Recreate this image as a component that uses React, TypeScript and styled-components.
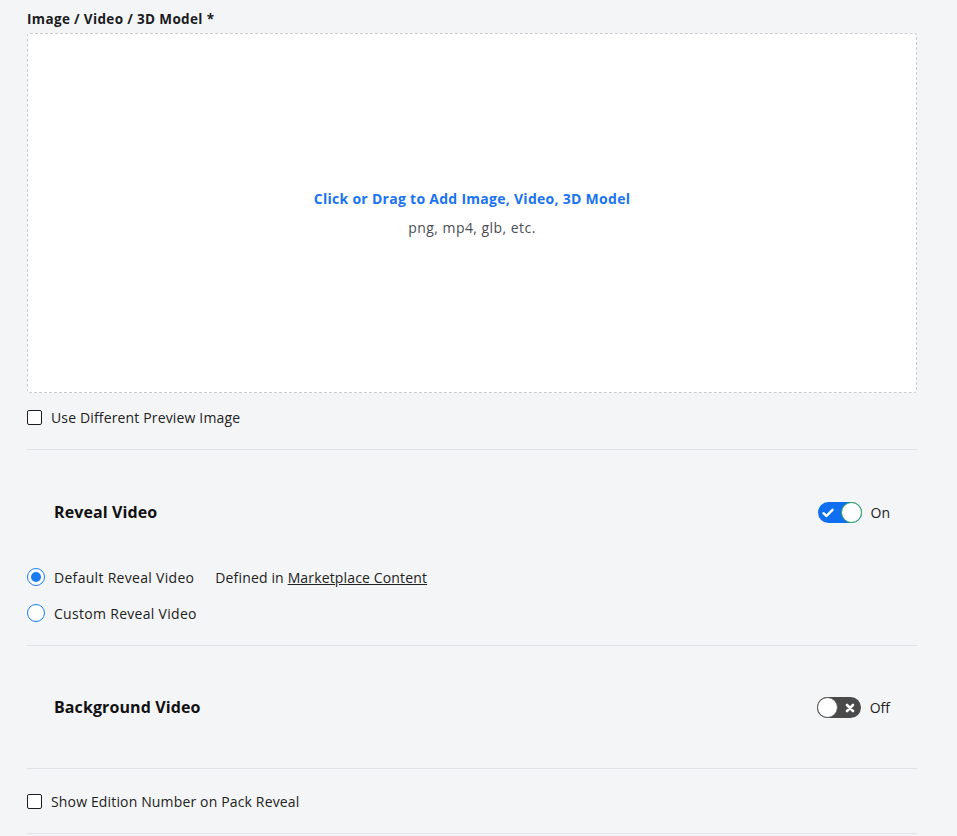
import React from "react";
import styled, { createGlobalStyle } from "styled-components";

const Global = createGlobalStyle`
  html, body { margin: 0; padding: 0; background: #f4f5f7; }
  body { font-family: "Open Sans", "Noto Sans", sans-serif; color: #1b1b1f; }
  * { box-sizing: border-box; }
`;

const Page = styled.div`
  width: 957px;
  padding: 10px 40px 0 27px;
  display: flex;
  flex-direction: column;
`;

const FieldLabel = styled.div`
  font-size: 13.5px;
  font-weight: 700;
  line-height: 18px;
  margin-bottom: 5px;
  letter-spacing: 0.35px;
`;

const Dropzone = styled.div`
  height: 360px;
  background: #ffffff;
  border: 1px dashed #c9cbcf;
  border-radius: 3px;
  display: flex;
  flex-direction: column;
  align-items: center;
  justify-content: center;
  gap: 10px;
`;

const DropTitle = styled.div`
  color: #1a73f0;
  font-size: 14px;
  font-weight: 700;
  letter-spacing: 0.28px;
  line-height: 19px;
`;

const DropHint = styled.div`
  color: #4a4d55;
  font-size: 14px;
  letter-spacing: 0.45px;
  line-height: 19px;
`;

const CheckRow = styled.label<{ $h: number; $mb?: number }>`
  display: flex;
  align-items: center;
  gap: 9px;
  height: ${(p) => p.$h}px;
  margin-bottom: ${(p) => p.$mb ?? 0}px;
  font-size: 14px;
  color: #222;
  letter-spacing: 0.15px;
`;

const Box = styled.span`
  width: 15px;
  height: 15px;
  border: 1.8px solid #1e1e1e;
  border-radius: 2px;
  background: #fff;
  flex: none;
`;

const Divider = styled.div`
  height: 1px;
  background: #e1e3e6;
`;

const SectionHead = styled.div<{ $pt: number; $pb: number }>`
  padding: ${(p) => p.$pt}px 27px ${(p) => p.$pb}px;
  display: flex;
  align-items: center;
  justify-content: space-between;
`;

const SectionTitle = styled.div`
  font-size: 16px;
  font-weight: 700;
  line-height: 21px;
  color: #111;
  letter-spacing: 0.1px;
`;

const ToggleWrap = styled.div`
  display: flex;
  align-items: center;
  gap: 9px;
  font-size: 14px;
  color: #222;
`;

const Track = styled.div<{ $on: boolean }>`
  width: 44px;
  height: 21px;
  border-radius: 11px;
  background: ${(p) => (p.$on ? "#0f6ff0" : "#4a4a4a")};
  display: flex;
  align-items: center;
  flex-direction: ${(p) => (p.$on ? "row" : "row-reverse")};
  justify-content: space-between;
  flex: none;
`;

const Knob = styled.div<{ $on: boolean }>`
  width: 21px;
  height: 21px;
  border-radius: 50%;
  background: #fff;
  border: 1.5px solid ${(p) => (p.$on ? "#2ea84a" : "#555")};
`;

const IconSlot = styled.div`
  width: 21px;
  display: flex;
  align-items: center;
  justify-content: center;
`;

const RadioList = styled.div`
  display: flex;
  flex-direction: column;
  padding-bottom: 14px;
`;

const RadioRow = styled.div`
  display: flex;
  align-items: center;
  height: 36px;
  font-size: 14px;
  color: #222;
  letter-spacing: 0.3px;
`;

const RadioDot = styled.span<{ $checked: boolean }>`
  width: 18px;
  height: 18px;
  border-radius: 50%;
  border: 1.6px solid #1a7cf0;
  background: #fff;
  display: flex;
  align-items: center;
  justify-content: center;
  margin-right: 9px;
  flex: none;
  &::after {
    content: "";
    width: 10px;
    height: 10px;
    border-radius: 50%;
    background: ${(p) => (p.$checked ? "#1a7cf0" : "transparent")};
  }
`;

const Note = styled.span`
  margin-left: 21px;
  color: #222;
  letter-spacing: 0.15px;
`;

const Link = styled.a`
  color: #222;
  text-decoration: underline;
`;

function Toggle({ on }: { on: boolean }) {
  return (
    <ToggleWrap>
      <Track $on={on}>
        <IconSlot>
          {on ? (
            <svg width="12" height="10" viewBox="0 0 12 10">
              <path d="M1.5 5.2 L4.5 8 L10.5 1.8" fill="none" stroke="#fff" strokeWidth="2.4" strokeLinecap="round" strokeLinejoin="round" />
            </svg>
          ) : (
            <svg width="10" height="10" viewBox="0 0 10 10">
              <path d="M2 2 L8 8 M8 2 L2 8" fill="none" stroke="#fff" strokeWidth="2.6" strokeLinecap="round" />
            </svg>
          )}
        </IconSlot>
        <Knob $on={on} />
      </Track>
      <span>{on ? "On" : "Off"}</span>
    </ToggleWrap>
  );
}

export default function App() {
  return (
    <>
      <Global />
      <Page>
        <FieldLabel>Image / Video / 3D Model *</FieldLabel>
        <Dropzone>
          <DropTitle>Click or Drag to Add Image, Video, 3D Model</DropTitle>
          <DropHint>png, mp4, glb, etc.</DropHint>
        </Dropzone>
        <CheckRow $h={48} $mb={8}>
          <Box />
          Use Different Preview Image
        </CheckRow>
        <Divider />
        <SectionHead $pt={52} $pb={36}>
          <SectionTitle>Reveal Video</SectionTitle>
          <Toggle on />
        </SectionHead>
        <RadioList>
          <RadioRow>
            <RadioDot $checked />
            Default Reveal Video
            <Note>
              Defined in <Link>Marketplace Content</Link>
            </Note>
          </RadioRow>
          <RadioRow>
            <RadioDot $checked={false} />
            Custom Reveal Video
          </RadioRow>
        </RadioList>
        <Divider />
        <SectionHead $pt={51} $pb={50}>
          <SectionTitle>Background Video</SectionTitle>
          <Toggle on={false} />
        </SectionHead>
        <Divider />
        <CheckRow $h={64}>
          <Box />
          Show Edition Number on Pack Reveal
        </CheckRow>
        <Divider />
      </Page>
    </>
  );
}
